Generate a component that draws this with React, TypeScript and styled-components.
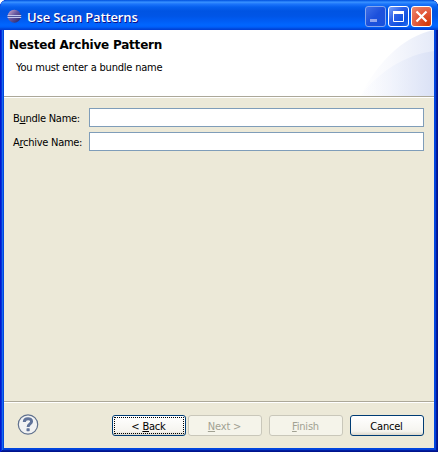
import React from "react";
import styled, { createGlobalStyle, css } from "styled-components";

const Global = createGlobalStyle`
  * { box-sizing: border-box; }
  body { margin: 0; background: #fff; overflow: hidden; }
`;

const Dialog = styled.div`
  width: 438px;
  height: 452px;
  display: flex;
  flex-direction: column;
  padding: 0 4px 4px;
  overflow: hidden;
  border-radius: 7px 7px 0 0;
  background: #0046e0;
  box-shadow: inset 1px 0 #0019cf, inset -1px 0 #00138c, inset 0 -1px #00138c,
    inset 2px 0 #0831d9, inset -2px 0 #001ea0, inset 0 -2px #001ea0,
    inset 3px 0 #166aee, inset -3px 0 #0441d8, inset 0 -3px #0441d8;
  font: 11px/14px "DejaVu Sans Condensed", "DejaVu Sans", sans-serif;
  font-stretch: condensed;
  color: #000;
`;

const TitleBar = styled.div`
  flex: 0 0 30px;
  margin: 0 -4px;
  padding: 3px 6px 0 7px;
  display: flex;
  align-items: center;
  background: linear-gradient(
    #0a58dc 0, #0d65ef 1px, #3d95ff 2px, #1c75fb 4px, #0660ee 7px, #0054e3 11px,
    #0055e6 16px, #005df5 21px, #0066ff 25px, #005ffa 27px, #0046d8 29px, #003dd7 30px
  );
`;

const Title = styled.div`
  flex: 1;
  padding-left: 5px;
  font: bold 13px/18px "Open Sans", sans-serif;
  font-weight: 600;
  letter-spacing: -0.15px;
  color: #fff;
  text-shadow: 1px 1px #0f1089;
`;

const Controls = styled.div`
  display: flex;
  gap: 2px;
`;

const Control = styled.div<{ $kind: "min" | "max" | "close" }>`
  width: 21px;
  height: 21px;
  border: 1px solid ${(p) => (p.$kind === "min" ? "#84a5ee" : "#fff")};
  border-radius: 3px;
  background: ${(p) =>
    p.$kind === "close"
      ? "radial-gradient(circle at 85% 90%, #d33a08, #e2573a 50%, #ef9c83 115%)"
      : p.$kind === "min"
      ? "linear-gradient(135deg, #3f70e8, #1c50dc 50%, #1951dc)"
      : "linear-gradient(135deg, #7aa2f8, #2c60e8 40%, #0d50e0 75%, #2470f4)"};
  svg { display: block; }
`;

const Header = styled.header`
  flex: 0 0 66px;
  position: relative;
  background: #fff;
  padding: 7px 5px;
`;

const Swoosh = styled.svg`
  position: absolute;
  right: 0;
  top: 0;
`;

const Heading = styled.div`
  position: relative;
  font: bold 12px/16px "DejaVu Sans", sans-serif;
  font-stretch: normal;
  letter-spacing: -0.21px;
`;

const Message = styled.div`
  position: relative;
  margin: 8px 0 0 7px;
  letter-spacing: -0.2px;
`;

const Body = styled.main`
  flex: 1;
  display: flex;
  flex-direction: column;
  gap: 5px;
  padding: 11px 10px 0 9px;
  background: #ece9d8;
  border-top: 1px solid #aca899;
  box-shadow: inset 0 1px #fff;
`;

const Field = styled.label`
  display: grid;
  grid-template-columns: 76px 1fr;
  align-items: center;
  height: 19px;
  white-space: nowrap;
  letter-spacing: -0.27px;
`;

const FieldLabel = styled.span`
  padding-top: 2px;
`;

const Input = styled.input`
  width: 100%;
  height: 19px;
  padding: 0 3px;
  border: 1px solid #7f9db9;
  background: #fff;
  font: inherit;
  outline: 0;
`;

const Key = styled.span`
  text-decoration: underline;
  text-decoration-thickness: 1px;
  text-underline-offset: 1px;
  text-decoration-skip-ink: none;
`;

const Footer = styled.footer`
  flex: 0 0 47px;
  display: flex;
  align-items: flex-start;
  padding: 12px 10px 0 13px;
  background: #ece9d8;
  border-top: 1px solid #aca899;
  box-shadow: inset 0 1px #fff;
`;

const Actions = styled.div`
  flex: 1;
  display: flex;
  justify-content: flex-end;
  gap: 7px;
  padding-top: 1px;
`;

const Pair = styled.div`
  display: flex;
  gap: 2px;
`;

const Button = styled.button<{ $focused?: boolean }>`
  width: 74px;
  height: 21px;
  padding: 2px 1px 0 0;
  border: 1px solid #003c74;
  border-radius: 3px;
  background: linear-gradient(#fff, #f5f4ef 80%, #dcd8cc);
  font: inherit;
  letter-spacing: -0.2px;
  color: #000;
  ${(p) =>
    p.$focused &&
    css`
      outline: 1px dotted #000;
      outline-offset: -3px;
    `}
  &:disabled {
    border-color: #c9c7ba;
    background: #f5f4ea;
    color: #a1a192;
  }
`;

const Logo = () => (
  <svg width="15" height="15" viewBox="0 0 15 15">
    <defs>
      <linearGradient id="orb" x2="1" y2="1">
        <stop offset="0" stopColor="#d7b0cd" />
        <stop offset=".45" stopColor="#6557a0" />
        <stop offset="1" stopColor="#202064" />
      </linearGradient>
    </defs>
    <circle cx="7.3" cy="7.2" r="6.5" fill="url(#orb)" />
    <path d="M.5 6.5h13.7M.5 8.5h13.7" stroke="#c3c8ec" strokeWidth="1" />
    <path d="M1 7.5h12.7" stroke="#51539c" strokeWidth="1" />
  </svg>
);

const HelpIcon = () => (
  <svg width="22" height="22" viewBox="0 0 22 22">
    <circle cx="11" cy="10.5" r="9.7" fill="#f1f2f3" stroke="#60718d" strokeWidth="1.2" />
    <path d="M7.3 8C7.3 3.6 14.6 3.7 14.6 7.5C14.6 10 11.1 9.8 11.1 12.9" fill="none" stroke="#60739a" strokeWidth="3" />
    <rect x="9.5" y="14.3" width="3.2" height="2.9" rx=".6" fill="#60739a" />
  </svg>
);

export default function App() {
  return (
    <>
      <Global />
      <Dialog>
        <TitleBar>
          <Logo />
          <Title>Use Scan Patterns</Title>
          <Controls>
            <Control $kind="min">
              <svg width="19" height="19"><path d="M4 12h7v3H4z" fill="#91a5ee" /></svg>
            </Control>
            <Control $kind="max">
              <svg width="19" height="19">
                <path d="M4.5 4.5h10v10h-10z" fill="none" stroke="#fff" />
                <path d="M4 4h11v3H4z" fill="#fff" />
              </svg>
            </Control>
            <Control $kind="close">
              <svg width="19" height="19"><path d="M4.5 4.5l10 10m0-10l-10 10" stroke="#fff" strokeWidth="2.2" /></svg>
            </Control>
          </Controls>
        </TitleBar>
        <Header>
          <Swoosh width="74" height="66" viewBox="0 0 74 66">
            <defs>
              <linearGradient id="outer" x2="1">
                <stop offset="0" stopColor="#fff" />
                <stop offset=".4" stopColor="#f8f9fd" />
                <stop offset="1" stopColor="#e5eaf8" />
              </linearGradient>
              <linearGradient id="inner" x2="1">
                <stop offset="0" stopColor="#f8faff" stopOpacity=".2" />
                <stop offset="1" stopColor="#dae1f5" />
              </linearGradient>
            </defs>
            <path d="M0 66C17 34 41 7 74 0V66z" fill="url(#outer)" />
            <path d="M0 66C19 42 44 25 74 21V66z" fill="url(#inner)" />
          </Swoosh>
          <Heading>Nested Archive Pattern</Heading>
          <Message>You must enter a bundle name</Message>
        </Header>
        <Body>
          <Field><FieldLabel>B<Key>u</Key>ndle Name:</FieldLabel><Input /></Field>
          <Field><FieldLabel>A<Key>r</Key>chive Name:</FieldLabel><Input /></Field>
        </Body>
        <Footer>
          <HelpIcon />
          <Actions>
            <Pair>
              <Button $focused>&lt; <Key>B</Key>ack</Button>
              <Button disabled><Key>N</Key>ext &gt;</Button>
            </Pair>
            <Button disabled><Key>F</Key>inish</Button>
            <Button>Cancel</Button>
          </Actions>
        </Footer>
      </Dialog>
    </>
  );
}
